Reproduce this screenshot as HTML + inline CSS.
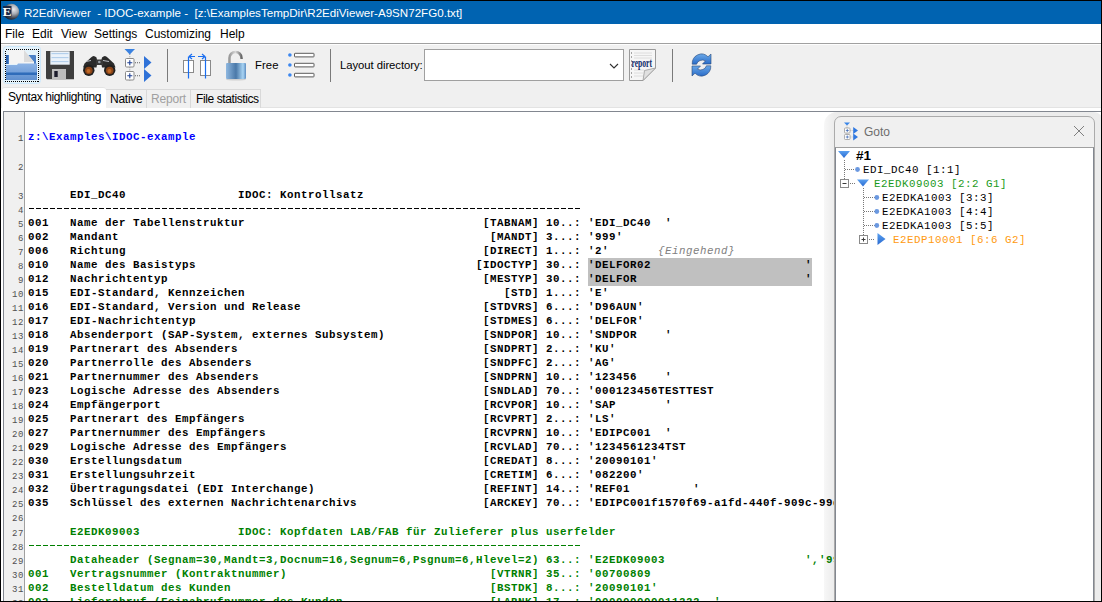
<!DOCTYPE html>
<html><head><meta charset="utf-8">
<style>
*{box-sizing:border-box}
html,body{margin:0;padding:0}
body{width:1102px;height:602px;background:#000;position:relative;overflow:hidden;font-family:"Liberation Sans",sans-serif}
.a{position:absolute}
#win{left:1px;top:1px;width:1100px;height:600px;background:#f0f0f0;overflow:hidden}
#title{left:0;top:0;width:1100px;height:23px;background:#0063b1;color:#fff;font-size:11.6px;white-space:pre}
#menu{left:0;top:23px;width:1100px;height:19px;background:#fff;font-size:12px;color:#000}
#menu span{position:absolute;top:3px}
#mline{left:0;top:42px;width:1100px;height:1px;background:#a0a0a0}
#mline2{left:0;top:43px;width:1100px;height:1px;background:#fdfdfd}
.sep{width:1px;background:#7f7f7f}
.tt{font-size:12px;color:#000;white-space:pre}
#page{left:0;top:107px;width:1100px;height:493px;background:#fff}
.tab{top:88px;height:19px;background:#f0f0f0;border:1px solid #d9d9d9;border-bottom:none;font-size:12px;white-space:pre}
#editor{left:2px;top:110px;width:1200px;height:495px;border:1px solid #828790;background:#fff;overflow:hidden}
#gutter{left:0;top:0;width:21px;height:500px;background:#f0f0f0;border-right:1px solid #a0a0a0}
.gn{position:absolute;right:0px;height:14px;line-height:14px;font-family:"Liberation Mono",monospace;font-size:9px;letter-spacing:0.6px;color:#505050;text-align:right}
#code{left:24px;top:0;width:900px;height:500px}
.ln{position:absolute;left:0px;height:14px;line-height:14px;font-family:"Liberation Mono",monospace;font-weight:bold;font-size:10.8px;letter-spacing:0.52px;white-space:pre}
.k{color:#000}
.b{color:#0000ff}
.g{color:#008000}
.c{color:#808080;font-style:italic;font-weight:normal}
.hl{background:#c0c0c0}
#goto{left:833px;top:115px;width:261px;height:490px;background:#f0f0f0;border:1px solid #a0a0a0;border-radius:7px 7px 0 0}
#shadow{left:822px;top:112px;width:278px;height:500px;background:rgba(0,0,0,0.06);border-radius:12px 12px 0 0}
#tree{left:0;top:30px;width:259px;height:460px;background:#fff;border-top:1px solid #a0a0a0;border-right:1px solid #828790}
.tr{position:absolute;height:14px;line-height:14px;font-family:"Liberation Mono",monospace;font-weight:bold;font-size:10.8px;letter-spacing:0.52px;white-space:pre}
.dash{position:absolute;left:0;top:6px;width:553px;height:1px}
</style></head><body>
<div id="win" class="a">
  <div id="title" class="a">
    <svg class="a" style="left:0px;top:1px" width="22" height="22" viewBox="0 0 22 22">
      <defs><radialGradient id="gl" cx="0.65" cy="0.35" r="0.7"><stop offset="0" stop-color="#e8eaee"/><stop offset="0.4" stop-color="#a8aeb6"/><stop offset="0.8" stop-color="#3a404a"/><stop offset="1" stop-color="#1a2030"/></radialGradient></defs>
      <circle cx="10.2" cy="9.8" r="8" fill="url(#gl)"/>
      <rect x="2" y="4" width="8.5" height="10.5" fill="#1a2a48"/><text x="1.4" y="14.2" font-family="Liberation Serif" font-weight="bold" font-size="13.5" fill="#fff">E</text>
    </svg>
    <div class="a" style="left:23px;top:5px">R2EdiViewer  - IDOC-example -  [z:\ExamplesTempDir\R2EdiViewer-A9SN72FG0.txt]</div>
  </div>
  <div id="menu" class="a">
    <span style="left:4px">File</span><span style="left:31px">Edit</span><span style="left:60px">View</span><span style="left:93px">Settings</span><span style="left:144px">Customizing</span><span style="left:219px">Help</span>
  </div>
  <div id="mline" class="a"></div>
  <div id="mline2" class="a"></div>

  <!-- toolbar -->
  <div class="a tt" style="left:254px;top:58px;font-size:11.3px;letter-spacing:0.1px">Free</div>
  <div class="a tt" style="left:339px;top:58px;font-size:11.3px;letter-spacing:-0.05px">Layout directory:</div>
  <div class="a" style="left:423px;top:48px;width:200px;height:32px;background:#fff;border:1px solid #a0a0a0"></div>

  <!-- tabs -->
  <div id="page" class="a"></div>
  <div class="a" style="left:104px;top:106px;width:996px;height:1px;background:#e3e3e3"></div>
  <div class="a tab" style="left:104px;width:42px">&#8203;</div>
  <div class="a tab" style="left:145px;width:45px"></div>
  <div class="a tab" style="left:189px;width:71px"></div>
  <div class="a" style="left:1px;top:86px;width:104px;height:22px;background:#fff;border-top:1px solid #e3e3e3;border-radius:3px 3px 0 0"></div>
  <div class="a tt" style="left:7px;top:89px;letter-spacing:-0.4px">Syntax highlighting</div>
  <div class="a tt" style="left:109px;top:91px;letter-spacing:-0.25px">Native</div>
  <div class="a tt" style="left:150px;top:91px;color:#a0a0a0;letter-spacing:-0.17px">Report</div>
  <div class="a tt" style="left:195px;top:91px;letter-spacing:-0.4px">File statistics</div>

  <div id="editor" class="a">
    <div id="gutter" class="a">
<div class="gn" style="top:20.0px">1</div>
<div class="gn" style="top:49.0px">2</div>
<div class="gn" style="top:78.0px">3</div>
<div class="gn" style="top:92.0px">4</div>
<div class="gn" style="top:106.0px">5</div>
<div class="gn" style="top:120.0px">6</div>
<div class="gn" style="top:134.0px">7</div>
<div class="gn" style="top:148.0px">8</div>
<div class="gn" style="top:162.0px">9</div>
<div class="gn" style="top:176.0px">10</div>
<div class="gn" style="top:190.0px">11</div>
<div class="gn" style="top:204.0px">12</div>
<div class="gn" style="top:218.0px">13</div>
<div class="gn" style="top:232.0px">14</div>
<div class="gn" style="top:246.0px">15</div>
<div class="gn" style="top:260.0px">16</div>
<div class="gn" style="top:274.0px">17</div>
<div class="gn" style="top:288.0px">18</div>
<div class="gn" style="top:302.0px">19</div>
<div class="gn" style="top:316.0px">20</div>
<div class="gn" style="top:330.0px">21</div>
<div class="gn" style="top:344.0px">22</div>
<div class="gn" style="top:358.0px">23</div>
<div class="gn" style="top:372.0px">24</div>
<div class="gn" style="top:386.0px">25</div>
<div class="gn" style="top:400.0px">26</div>
<div class="gn" style="top:415.0px">27</div>
<div class="gn" style="top:429.0px">28</div>
<div class="gn" style="top:443.0px">29</div>
<div class="gn" style="top:457.0px">30</div>
<div class="gn" style="top:471.0px">31</div>
<div class="gn" style="top:485.0px">32</div>
    </div>
    <div id="code" class="a">
<div class="a" style="left:560px;top:146.0px;width:224px;height:28px;background:#c0c0c0"></div>
<div class="ln" style="top:18.0px"><span class="b">z:\Examples\IDOC-example</span></div>
<div class="ln" style="top:47.0px"></div>
<div class="ln" style="top:76.0px"><span class="k">      EDI_DC40                IDOC: Kontrollsatz</span></div>
<div class="ln" style="top:90.0px"><div class="dash" style="background:repeating-linear-gradient(90deg,transparent 0,transparent 1px,#000 1px,#000 6px,transparent 6px,transparent 7px)"></div></div>
<div class="ln" style="top:104.0px"><span class="k">001   Name der Tabellenstruktur                                  [TABNAM] 10..: </span><span class="k">'EDI_DC40  '</span></div>
<div class="ln" style="top:118.0px"><span class="k">002   Mandant                                                     [MANDT] 3...: </span><span class="k">'999'</span></div>
<div class="ln" style="top:132.0px"><span class="k">006   Richtung                                                   [DIRECT] 1...: </span><span class="k">'2'</span><span class="k">       </span><span class="c">{Eingehend}</span></div>
<div class="ln" style="top:146.0px"><span class="k">010   Name des Basistyps                                        [IDOCTYP] 30..: </span><span class="k">'DELFOR02                      '</span></div>
<div class="ln" style="top:160.0px"><span class="k">012   Nachrichtentyp                                             [MESTYP] 30..: </span><span class="k">'DELFOR                        '</span></div>
<div class="ln" style="top:174.0px"><span class="k">015   EDI-Standard, Kennzeichen                                     [STD] 1...: </span><span class="k">'E'</span></div>
<div class="ln" style="top:188.0px"><span class="k">016   EDI-Standard, Version und Release                          [STDVRS] 6...: </span><span class="k">'D96AUN'</span></div>
<div class="ln" style="top:202.0px"><span class="k">017   EDI-Nachrichtentyp                                         [STDMES] 6...: </span><span class="k">'DELFOR'</span></div>
<div class="ln" style="top:216.0px"><span class="k">018   Absenderport (SAP-System, externes Subsystem)              [SNDPOR] 10..: </span><span class="k">'SNDPOR    '</span></div>
<div class="ln" style="top:230.0px"><span class="k">019   Partnerart des Absenders                                   [SNDPRT] 2...: </span><span class="k">'KU'</span></div>
<div class="ln" style="top:244.0px"><span class="k">020   Partnerrolle des Absenders                                 [SNDPFC] 2...: </span><span class="k">'AG'</span></div>
<div class="ln" style="top:258.0px"><span class="k">021   Partnernummer des Absenders                                [SNDPRN] 10..: </span><span class="k">'123456    '</span></div>
<div class="ln" style="top:272.0px"><span class="k">023   Logische Adresse des Absenders                             [SNDLAD] 70..: </span><span class="k">'000123456TESTTEST</span></div>
<div class="ln" style="top:286.0px"><span class="k">024   Empfängerport                                              [RCVPOR] 10..: </span><span class="k">'SAP       '</span></div>
<div class="ln" style="top:300.0px"><span class="k">025   Partnerart des Empfängers                                  [RCVPRT] 2...: </span><span class="k">'LS'</span></div>
<div class="ln" style="top:314.0px"><span class="k">027   Partnernummer des Empfängers                               [RCVPRN] 10..: </span><span class="k">'EDIPC001  '</span></div>
<div class="ln" style="top:328.0px"><span class="k">029   Logische Adresse des Empfängers                            [RCVLAD] 70..: </span><span class="k">'1234561234TST</span></div>
<div class="ln" style="top:342.0px"><span class="k">030   Erstellungsdatum                                           [CREDAT] 8...: </span><span class="k">'20090101'</span></div>
<div class="ln" style="top:356.0px"><span class="k">031   Erstellungsuhrzeit                                         [CRETIM] 6...: </span><span class="k">'082200'</span></div>
<div class="ln" style="top:370.0px"><span class="k">032   Übertragungsdatei (EDI Interchange)                        [REFINT] 14..: </span><span class="k">'REF01         '</span></div>
<div class="ln" style="top:384.0px"><span class="k">035   Schlüssel des externen Nachrichtenarchivs                  [ARCKEY] 70..: </span><span class="k">'EDIPC001f1570f69-a1fd-440f-909c-99d</span></div>
<div class="ln" style="top:398.0px"></div>
<div class="ln" style="top:413.0px"><span class="g">      E2EDK09003              IDOC: Kopfdaten LAB/FAB für Zulieferer plus userfelder</span></div>
<div class="ln" style="top:427.0px"><div class="dash" style="background:repeating-linear-gradient(90deg,transparent 0,transparent 1px,#008000 1px,#008000 6px,transparent 6px,transparent 7px)"></div></div>
<div class="ln" style="top:441.0px"><span class="g">      Dataheader (Segnam=30,Mandt=3,Docnum=16,Segnum=6,Psgnum=6,Hlevel=2) 63..: 'E2EDK09003                    ','999</span></div>
<div class="ln" style="top:455.0px"><span class="g">001   Vertragsnummer (Kontraktnummer)                             [VTRNR] 35..: '00700809</span></div>
<div class="ln" style="top:469.0px"><span class="g">002   Bestelldatum des Kunden                                     [BSTDK] 8...: '20090101'</span></div>
<div class="ln" style="top:483.0px"><span class="g">003   Lieferabruf (Feinabrufnummer des Kunden                     [LABNK] 17..: '000000000011222  '</span></div>
    </div>
  </div>

</div>
<svg class="a" style="left:0;top:0" width="730" height="90" viewBox="0 0 730 90">
  <defs>
    <linearGradient id="fold" x1="0" y1="0" x2="0" y2="1"><stop offset="0" stop-color="#8db4e6"/><stop offset="1" stop-color="#5f8fcf"/></linearGradient>
    <linearGradient id="lockg" x1="0" y1="0" x2="1" y2="0"><stop offset="0" stop-color="#8fb8e0"/><stop offset="0.5" stop-color="#4a78a8"/><stop offset="0.85" stop-color="#a8d4f4"/><stop offset="1" stop-color="#5c8cc0"/></linearGradient>
    <linearGradient id="shack" x1="0" y1="0" x2="1" y2="0"><stop offset="0" stop-color="#9a9a9a"/><stop offset="0.5" stop-color="#d8d8d8"/><stop offset="1" stop-color="#6a6a6a"/></linearGradient>
    <linearGradient id="refg" x1="0" y1="0" x2="0" y2="1"><stop offset="0" stop-color="#6aa8e8"/><stop offset="1" stop-color="#2a6cc8"/></linearGradient>
  </defs>
  <!-- open folder -->
  <rect x="3.5" y="46.5" width="37" height="37" rx="3" fill="#e5f3fb" stroke="#cde8fb"/>
  <path d="M6 55 h3 v9 h-3z" fill="#2f64b0"/>
  <path d="M8 55 h27 a1 1 0 0 1 1 1 v8 h-28z" fill="#4b82c8"/>
  <path d="M9 50 h15 l10 12 v2 h-25z" fill="#f4f4f4"/>
  <path d="M24 50 l10 12 h-10z" fill="#dcdcdc"/>
  <path d="M6 65 h11 l1 -1.5 h19 v16.5 h-31z" fill="url(#fold)"/>
  <rect x="6" y="72.5" width="31" height="2.5" fill="#2f6cba"/>
  <rect x="5.5" y="49.5" width="33" height="32" fill="none" stroke="#000" stroke-width="1" stroke-dasharray="1 1" shape-rendering="crispEdges"/>
  <!-- floppy -->
  <path d="M46 51 h28 v28.3 h-27 l-1 -1z" fill="#3e3e3e"/>
  <rect x="50.3" y="51.3" width="19.4" height="13.4" fill="#eaf2fa"/>
  <rect x="51.5" y="53.3" width="17" height="0.8" fill="#9cc0e4"/>
  <rect x="51.5" y="57.3" width="17" height="0.8" fill="#9cc0e4"/>
  <rect x="51.5" y="61.3" width="17" height="0.8" fill="#9cc0e4"/>
  <rect x="52" y="69" width="14" height="10.3" fill="#bdbdbd"/>
  <rect x="54.3" y="71" width="3.4" height="6" fill="#1a1a2a"/>
  <!-- binoculars -->
  <path d="M91 57.5 Q93.5 54.5 96.5 57.5 L97.5 62 L96.5 67.5 L83 67.5 L84.5 63.5 Z" fill="#2b2b2b"/>
  <path d="M107.5 57.5 Q105 54.5 102 57.5 L101 62 L102 67.5 L115.5 67.5 L114 63.5 Z" fill="#2b2b2b"/>
  <rect x="96" y="59.5" width="7" height="5.5" fill="#383838"/>
  <circle cx="99.3" cy="62" r="1.3" fill="#9aa0a8"/>
  <circle cx="88.8" cy="70.2" r="5.7" fill="#202020"/>
  <circle cx="109.7" cy="70.2" r="5.7" fill="#202020"/>
  <circle cx="88.8" cy="70.5" r="3.8" fill="#8a4418"/>
  <circle cx="109.7" cy="70.5" r="3.8" fill="#8a4418"/>
  <circle cx="88.5" cy="71" r="2" fill="#c06a28"/>
  <circle cx="109.5" cy="71" r="2" fill="#c06a28"/>
  <path d="M86 61.5 l5 -1 M103 60.5 l6 1" stroke="#b8bcc4" stroke-width="1"/>
  <!-- goto tree icon -->
  <path d="M124.5 49 h10.5 l-5.25 5.5z" fill="#3b82e0"/>
  <path d="M129.8 54 v27" stroke="#808080" stroke-width="0.8" stroke-dasharray="1 1.2"/>
  <rect x="125.5" y="58.5" width="8.5" height="8.5" rx="1" fill="#fff" stroke="#8a8a8a"/>
  <rect x="125.5" y="71.5" width="8.5" height="8.5" rx="1" fill="#fff" stroke="#8a8a8a"/>
  <path d="M127.3 62.75 h5 M129.8 60.3 v5 M127.3 75.75 h5 M129.8 73.3 v5" stroke="#1c3f94" stroke-width="1.1"/>
  <path d="M135 62.75 h6 M135 75.75 h6" stroke="#606060" stroke-width="1" stroke-dasharray="1 1"/>
  <path d="M144 56 l7.5 6.5 l-7.5 6.5z M144 69 l7.5 6.5 l-7.5 6.5z" fill="#2f72d8"/>
  <!-- separators -->
  <rect x="167" y="49" width="1" height="33" fill="#7a7a7a"/>
  <rect x="330" y="49" width="1" height="33" fill="#7a7a7a"/>
  <rect x="672" y="49" width="1" height="33" fill="#7a7a7a"/>
  <!-- split icon -->
  <rect x="183.5" y="60.5" width="10" height="12" fill="#fff" stroke="#8a8a8a"/>
  <rect x="200.5" y="60.5" width="10" height="15" fill="#fff" stroke="#8a8a8a"/>
  <path d="M188.5 56.5 v22 M205.5 56.5 v22" stroke="#1a6ef0" stroke-width="1.2"/>
  <path d="M189 56.5 h6 M198 56.5 h7" stroke="#1a6ef0" stroke-width="1.1"/>
  <path d="M189 56.5 l3 -2.5 M189 56.5 l3 2.5 M205 56.5 l-3 -2.5 M205 56.5 l-3 2.5" stroke="#1a6ef0" stroke-width="1.1"/>
  <!-- lock -->
  <path d="M229.5 63 v-5 a6 6 0 0 1 12 0 v1" fill="none" stroke="url(#shack)" stroke-width="2.6"/>
  <ellipse cx="236" cy="79.5" rx="10" ry="1" fill="#d0d0d0"/>
  <rect x="226" y="63" width="20" height="16" rx="1" fill="url(#lockg)"/>
  <!-- list icon -->
  <circle cx="289.9" cy="55" r="1.8" fill="#3a86f0"/>
  <circle cx="289.9" cy="65" r="1.8" fill="#3a86f0"/>
  <circle cx="289.9" cy="75" r="1.8" fill="#3a86f0"/>
  <rect x="294.5" y="53.3" width="19.5" height="3.6" rx="0.6" fill="#fff" stroke="#5a5a5a"/>
  <rect x="294.5" y="63.3" width="19.5" height="3.6" rx="0.6" fill="#fff" stroke="#5a5a5a"/>
  <rect x="294.5" y="73.3" width="19.5" height="3.6" rx="0.6" fill="#fff" stroke="#5a5a5a"/>
  <!-- combo chevron -->
  <path d="M610 64 l4 4 l4 -4" fill="none" stroke="#303030" stroke-width="1.1"/>
  <!-- report icon -->
  <path d="M629.5 49.5 h26 v18.5 l-12.5 12.5 h-13.5z" fill="#f6f6f6" stroke="#9a9a9a"/>
  <path d="M643 80.5 l1.5 -10 l11 -2.5z" fill="#e0e0e0" stroke="#9a9a9a" stroke-width="0.8"/>
  <path d="M634 53 h18 M634 55.5 h18 M634 58 h18 M634 70 h10 M634 73 h10 M634 76 h9" stroke="#d8d8d8" stroke-width="0.8"/>
  <path d="M631.5 52.5 v1 M631.5 56.5 v1 M631.5 60.5 v1 M631.5 64.5 v1 M631.5 68.5 v1 M631.5 72.5 v1 M631.5 76.5 v1" stroke="#555" stroke-width="1"/>
  <text x="631.5" y="66.5" font-family="Liberation Serif" font-weight="bold" font-size="11.5" fill="#0d2a6a" textLength="20.5" lengthAdjust="spacingAndGlyphs">report</text>
  <!-- refresh icon -->
  <path d="M692.2 64.2 A9.3 9.8 0 0 1 708 56.8 L711 54 V64 H702.5 L705.5 60.8 A6 5.2 0 0 0 696.6 64.2 Z" fill="url(#refg)" stroke="#2a4a7a" stroke-width="0.6"/>
  <path d="M710.8 65.8 A9.3 9.8 0 0 1 695 73.2 L692 76 V66 H700.5 L697.5 69.2 A6 5.2 0 0 0 706.4 65.8 Z" fill="url(#refg)" stroke="#2a4a7a" stroke-width="0.6"/>
</svg>

<div class="a" style="left:0;top:0;width:1101px;height:601px;overflow:hidden">
<div class="a" style="left:824px;top:112px;width:280px;height:495px;background:linear-gradient(to right,rgba(0,0,0,0.03),rgba(0,0,0,0.075) 10px);border-radius:13px 11px 0 0"></div>
<div class="a" style="left:834px;top:116px;width:261px;height:490px;background:#f0f0f0;border:1px solid #ababab;border-radius:7px 7px 0 0"></div>
<div class="a" style="left:835px;top:147px;width:259px;height:460px;background:#fff;border-left:1px solid #828790;border-top:1px solid #a0a0a0;border-right:1px solid #828790"></div>
<div class="a" style="left:864px;top:125px;font-size:12px;color:#6d6d6d">Goto</div>
<svg class="a" style="left:830px;top:112px" width="272" height="140" viewBox="830 112 272 140">
  <!-- header icon -->
  <path d="M844 122.5 h6 l-3 3z" fill="#3a86e8"/>
  <path d="M847 125.5 v14" stroke="#9a9a9a" stroke-width="0.7" stroke-dasharray="0.8 0.8"/>
  <rect x="844.5" y="128" width="5.5" height="5" rx="0.8" fill="#fff" stroke="#9a9a9a" stroke-width="0.8"/>
  <rect x="844.5" y="134.5" width="5.5" height="5" rx="0.8" fill="#fff" stroke="#9a9a9a" stroke-width="0.8"/>
  <path d="M845.8 130.5 h3 M847.3 129 v3 M845.8 137 h3 M847.3 135.5 v3" stroke="#3060b0" stroke-width="0.7"/>
  <path d="M850.5 130.5 h2 M850.5 137 h2" stroke="#9a9a9a" stroke-width="0.7" stroke-dasharray="0.8 0.8"/>
  <path d="M853.2 127 l4.8 3.5 l-4.8 3.5z M853.2 133.5 l4.8 3.5 l-4.8 3.5z" fill="#2f78e0"/>
  <!-- close X -->
  <path d="M1074 126 l10 10 M1084 126 l-10 10" stroke="#6a6a6a" stroke-width="0.85"/>
  <!-- tree -->
  <defs><linearGradient id="tri" x1="0" y1="0" x2="0" y2="1"><stop offset="0" stop-color="#5aa0f0"/><stop offset="1" stop-color="#2a6ad0"/></linearGradient></defs>
  <path d="M838 151 h12 l-6 7z" fill="url(#tri)"/>
  <path d="M844.5 160 v19" stroke="#777" stroke-width="1" stroke-dasharray="1 1"/>
  <path d="M845 169.5 h10" stroke="#777" stroke-width="1" stroke-dasharray="1 1"/>
  <circle cx="857.5" cy="169.5" r="2.4" fill="#6a98e0"/>
  <rect x="840.5" y="179.5" width="8" height="8" fill="#fff" stroke="#8a8a8a"/>
  <path d="M842.5 183.5 h4" stroke="#3a3a3a" stroke-width="1"/>
  <path d="M850 183.5 h6" stroke="#777" stroke-width="1" stroke-dasharray="1 1"/>
  <path d="M857 179.5 h12 l-6 7z" fill="url(#tri)"/>
  <path d="M863.5 188 v47" stroke="#777" stroke-width="1" stroke-dasharray="1 1"/>
  <path d="M864 197.5 h11 M864 211.5 h11 M864 225.5 h11" stroke="#777" stroke-width="1" stroke-dasharray="1 1"/>
  <circle cx="876.8" cy="197.5" r="2.4" fill="#6a98e0"/>
  <circle cx="876.8" cy="211.5" r="2.4" fill="#6a98e0"/>
  <circle cx="876.8" cy="225.5" r="2.4" fill="#6a98e0"/>
  <rect x="859.5" y="235.5" width="8" height="8" fill="#fff" stroke="#8a8a8a"/>
  <path d="M861.5 239.5 h4 M863.5 237.5 v4" stroke="#3a3a3a" stroke-width="1"/>
  <path d="M869 239.5 h5" stroke="#777" stroke-width="1" stroke-dasharray="1 1"/>
  <path d="M877.5 233 l8 6 l-8 6z" fill="url(#tri)"/>
</svg>
<div class="a" style="left:856px;top:148px;font-size:13.5px;font-weight:bold;color:#000">#1</div>
<div class="tr" style="left:863px;top:163px;font-weight:normal">EDI_DC40 [1:1]</div>
<div class="tr" style="left:874px;top:177px;color:#1a9a1a;font-weight:normal">E2EDK09003 [2:2 G1]</div>
<div class="tr" style="left:882px;top:191px;font-weight:normal">E2EDKA1003 [3:3]</div>
<div class="tr" style="left:882px;top:205px;font-weight:normal">E2EDKA1003 [4:4]</div>
<div class="tr" style="left:882px;top:219px;font-weight:normal">E2EDKA1003 [5:5]</div>
<div class="tr" style="left:893px;top:233px;color:#ff9a10;font-weight:normal">E2EDP10001 [6:6 G2]</div>

</div>

</body></html>
